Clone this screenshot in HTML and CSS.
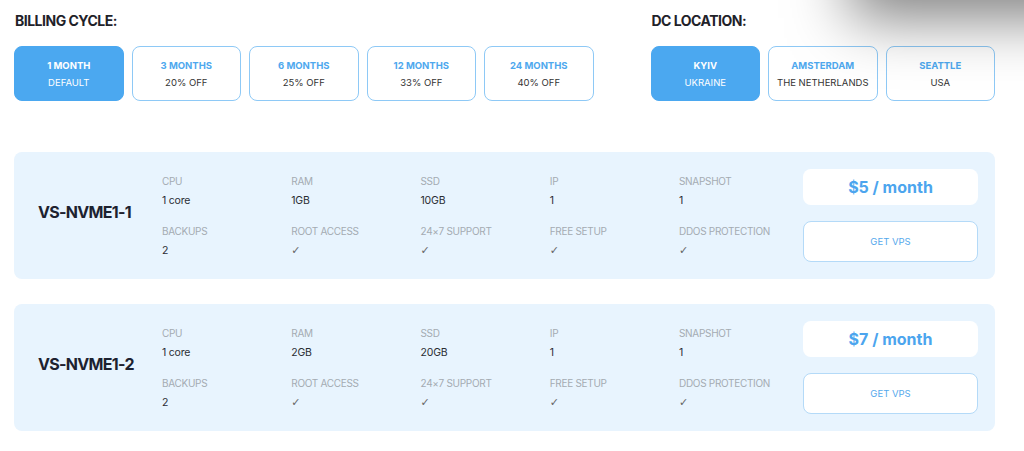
FILE: index.html
```html
<!DOCTYPE html>
<html lang="en">
<head>
<meta charset="utf-8">
<title>VPS plans</title>
<link rel="stylesheet" href="styles.css">
</head>
<body>
<div class="shade"></div>
<div class="page">
  <div class="top">
    <section class="group">
      <h2 class="group-title">BILLING CYCLE:</h2>
      <div class="options">
        <div class="opt active"><span class="opt-main">1 MONTH</span><span class="opt-sub">DEFAULT</span></div>
        <div class="opt"><span class="opt-main">3 MONTHS</span><span class="opt-sub">20% OFF</span></div>
        <div class="opt"><span class="opt-main">6 MONTHS</span><span class="opt-sub">25% OFF</span></div>
        <div class="opt"><span class="opt-main">12 MONTHS</span><span class="opt-sub">33% OFF</span></div>
        <div class="opt"><span class="opt-main">24 MONTHS</span><span class="opt-sub">40% OFF</span></div>
      </div>
    </section>
    <section class="group">
      <h2 class="group-title">DC LOCATION:</h2>
      <div class="options">
        <div class="opt active"><span class="opt-main">KYIV</span><span class="opt-sub">UKRAINE</span></div>
        <div class="opt"><span class="opt-main">AMSTERDAM</span><span class="opt-sub">THE NETHERLANDS</span></div>
        <div class="opt"><span class="opt-main">SEATTLE</span><span class="opt-sub">USA</span></div>
      </div>
    </section>
  </div>

  <div class="plans">
    <div class="plan">
      <div class="plan-name">VS-NVME1-1</div>
      <div class="specs">
        <div class="spec"><div class="spec-label">CPU</div><div class="spec-value">1 core</div></div>
        <div class="spec"><div class="spec-label">RAM</div><div class="spec-value">1GB</div></div>
        <div class="spec"><div class="spec-label">SSD</div><div class="spec-value">10GB</div></div>
        <div class="spec"><div class="spec-label">IP</div><div class="spec-value">1</div></div>
        <div class="spec"><div class="spec-label">SNAPSHOT</div><div class="spec-value">1</div></div>
        <div class="spec"><div class="spec-label">BACKUPS</div><div class="spec-value">2</div></div>
        <div class="spec"><div class="spec-label">ROOT ACCESS</div><div class="spec-value check">✓</div></div>
        <div class="spec"><div class="spec-label">24×7 SUPPORT</div><div class="spec-value check">✓</div></div>
        <div class="spec"><div class="spec-label">FREE SETUP</div><div class="spec-value check">✓</div></div>
        <div class="spec"><div class="spec-label">DDOS PROTECTION</div><div class="spec-value check">✓</div></div>
      </div>
      <div class="buy">
        <div class="price">$5 / month</div>
        <div class="get">GET VPS</div>
      </div>
    </div>

    <div class="plan">
      <div class="plan-name">VS-NVME1-2</div>
      <div class="specs">
        <div class="spec"><div class="spec-label">CPU</div><div class="spec-value">1 core</div></div>
        <div class="spec"><div class="spec-label">RAM</div><div class="spec-value">2GB</div></div>
        <div class="spec"><div class="spec-label">SSD</div><div class="spec-value">20GB</div></div>
        <div class="spec"><div class="spec-label">IP</div><div class="spec-value">1</div></div>
        <div class="spec"><div class="spec-label">SNAPSHOT</div><div class="spec-value">1</div></div>
        <div class="spec"><div class="spec-label">BACKUPS</div><div class="spec-value">2</div></div>
        <div class="spec"><div class="spec-label">ROOT ACCESS</div><div class="spec-value check">✓</div></div>
        <div class="spec"><div class="spec-label">24×7 SUPPORT</div><div class="spec-value check">✓</div></div>
        <div class="spec"><div class="spec-label">FREE SETUP</div><div class="spec-value check">✓</div></div>
        <div class="spec"><div class="spec-label">DDOS PROTECTION</div><div class="spec-value check">✓</div></div>
      </div>
      <div class="buy">
        <div class="price">$7 / month</div>
        <div class="get">GET VPS</div>
      </div>
    </div>
  </div>
</div>
</body>
</html>
```

FILE: styles.css
```css
* { box-sizing: border-box; }

html, body {
  margin: 0;
  padding: 0;
  background: #ffffff;
  overflow: hidden;
}

body {
  font-family: "Inter", "Noto Sans", "Liberation Sans", sans-serif;
  color: #222;
  width: 1024px;
  height: 451px;
  position: relative;
}

.shade {
  position: absolute;
  top: -90px;
  left: 850px;
  width: 260px;
  height: 90px;
  box-shadow: 0 18px 60px rgba(0, 0, 0, 0.5);
  background: #fff;
}

.page {
  padding: 11px 29px 0 14px;
}

.top {
  display: flex;
  justify-content: space-between;
}

.group-title {
  margin: 0 0 15px 1px;
  font-size: 14px;
  line-height: 20px;
  font-weight: 700;
  color: #1f2229;
  letter-spacing: -0.5px;
}

.options {
  display: flex;
  gap: 8px;
}

.opt {
  width: 109.5px;
  height: 55px;
  border: 1px solid #8ec9f6;
  border-radius: 8px;
  background: #fff;
  display: flex;
  flex-direction: column;
  align-items: center;
  justify-content: center;
  gap: 4px;
}

.opt-main {
  font-size: 9.5px;
  line-height: 13px;
  font-weight: 700;
  color: #4ea8ee;
}

.opt-sub {
  font-size: 9.5px;
  line-height: 13px;
  color: #333;
}

.opt.active {
  background: #4ba8f0;
  border-color: #4ba8f0;
}

.opt.active .opt-main,
.opt.active .opt-sub {
  color: #fff;
}

.plans {
  margin-top: 51px;
  display: flex;
  flex-direction: column;
  gap: 25px;
}

.plan {
  height: 127px;
  border-radius: 8px;
  background: #e8f4fe;
  padding: 17px 17px 17px 24px;
  display: flex;
  align-items: center;
}

.plan-name {
  width: 124px;
  flex: none;
  font-size: 16px;
  line-height: 20px;
  font-weight: 700;
  color: #1d2230;
  letter-spacing: -0.7px;
  margin-bottom: 7px;
}

.specs {
  display: grid;
  grid-template-columns: repeat(4, 129.25px) 124px;
  row-gap: 16px;
}

.spec-label {
  font-size: 10px;
  line-height: 14px;
  color: #a4abb2;
  letter-spacing: -0.3px;
  white-space: nowrap;
}

.spec-value {
  margin-top: 6px;
  font-size: 10.5px;
  line-height: 14px;
  color: #2a2d33;
  letter-spacing: -0.2px;
}

.spec-value.check {
  font-family: "DejaVu Sans", sans-serif;
  font-size: 11px;
  color: #666;
}

.buy {
  width: 175px;
  margin-left: auto;
  display: flex;
  flex-direction: column;
  gap: 16px;
}

.price {
  height: 36px;
  background: #fff;
  border-radius: 8px;
  display: flex;
  align-items: center;
  justify-content: center;
  font-size: 16px;
  font-weight: 700;
  color: #4ca5ee;
}

.get {
  height: 41px;
  background: #fff;
  border: 1px solid #b4daf8;
  border-radius: 8px;
  display: flex;
  align-items: center;
  justify-content: center;
  font-size: 9.5px;
  color: #56a9ec;
}
```
